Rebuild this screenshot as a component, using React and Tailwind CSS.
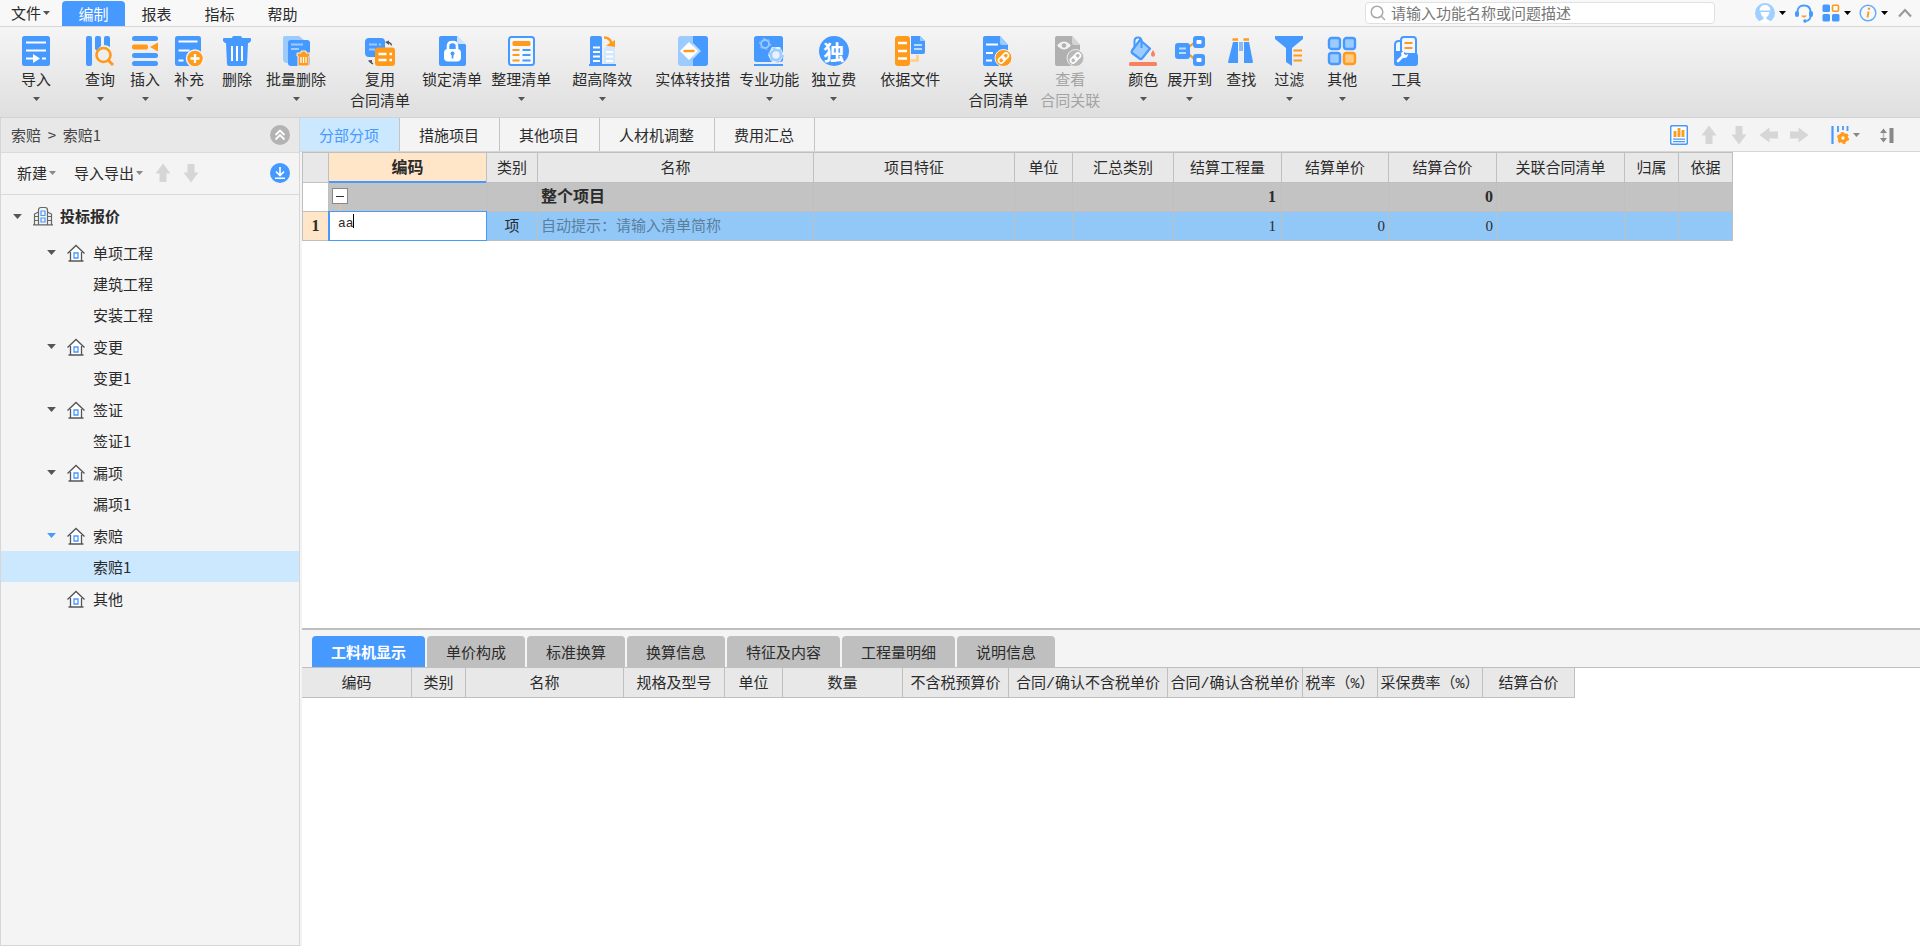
import React, { useState } from "react";

const BLUE = "#4599ff";
const ORANGE = "#ff9a1a";
const LIGHT = "#9ccbff";

function Icon({ children }) {
  return (
    <svg viewBox="0 0 30 30" className="h-[30px] w-[30px]" fill="none">
      {children}
    </svg>
  );
}

function Caret({ size = "h-1 w-[7px]", className = "text-[#555]" }) {
  return (
    <svg viewBox="0 0 7 4" className={`shrink-0 ${size} ${className}`}>
      <path d="M0 0h7L3.500 4z" fill="currentColor" />
    </svg>
  );
}

const ImportIcon = () => (
  <Icon>
    <rect x="1" width="28" height="30" rx="2.500" fill={BLUE} />
    <path d="M5 6.500h20M5 14.500h20M5 22.500h8M21 22.500h4" stroke="#fff" strokeWidth="2.200" />
    <path d="M12 18l7 4.500-7 4.500z" fill="#fff" />
  </Icon>
);

const QueryIcon = () => (
  <Icon>
    <rect x="1" width="6" height="30" rx="2" fill={BLUE} />
    <path d="M10 2q0-2 2-2h2q2 0 2 2v8q-3 2-4 5l-2-2z" fill={BLUE} />
    <path d="M19 2q0-2 2-2h2q2 0 2 2v9q-3-2-6-2z" fill={BLUE} />
    <circle cx="18.500" cy="19" r="7" stroke={ORANGE} strokeWidth="2.600" />
    <path d="M23.500 24.500l4.500 4.500" stroke={ORANGE} strokeWidth="3" />
  </Icon>
);

const InsertIcon = () => (
  <Icon>
    <rect x="2" width="26" height="5" rx="2.500" fill={BLUE} />
    <rect x="2" y="8.500" width="16" height="5" rx="2" fill={ORANGE} />
    <path d="M20 11l8-4.500v9z" fill={ORANGE} />
    <rect x="2" y="17" width="26" height="5" rx="2.500" fill={BLUE} />
    <rect x="2" y="25" width="26" height="5" rx="2.500" fill={BLUE} />
  </Icon>
);

const SupplementIcon = () => (
  <Icon>
    <rect x="1" width="26" height="30" rx="2.500" fill={BLUE} />
    <path d="M4.500 5.500h19M4.500 14.500h11M4.500 24.500h5" stroke="#fff" strokeWidth="2.200" />
    <circle cx="21" cy="22.500" r="8.500" fill={ORANGE} stroke="#f3f3f3" strokeWidth="1.500" />
    <path d="M16.500 22.500h9M21 18v9" stroke="#fff" strokeWidth="2.400" />
  </Icon>
);

const DeleteIcon = () => (
  <Icon>
    <path d="M10 2q0-2 2-2h6q2 0 2 2h8q1 0 1 1v2l-2 2h-1l-1 21q0 2-2 2H7q-2 0-2-2L4 7H3L1 5V3q0-1 1-1z" fill={BLUE} />
    <path d="M10 10v15M15 10v15M20 10v15" stroke="#fff" strokeWidth="2" />
  </Icon>
);

const BatchDeleteIcon = () => (
  <Icon>
    <path d="M4 0h14l5 4v23H6q-4 0-4-4V2q0-2 2-2z" fill={LIGHT} />
    <rect x="7" y="4" width="22" height="26" rx="3" fill={BLUE} />
    <path d="M10 8.500h12M10 13h8" stroke="#9ccbff" strokeWidth="2" />
    <path d="M20 15h5v2h4v3h-1v10H17V20h-1v-3h4z" fill={ORANGE} stroke="#f3f3f3" strokeWidth="1" />
    <path d="M20 21v6M22.500 21v6M25 21v6" stroke="#fff" strokeWidth="1.300" />
  </Icon>
);

const ReuseIcon = () => (
  <Icon>
    <rect y="2" width="20" height="19" rx="4" fill={BLUE} />
    <path d="M4 8.500h8M14 8.500h2M4 13.500h6" stroke="#9ccbff" strokeWidth="2" />
    <rect x="10" y="11.500" width="20" height="18.500" rx="3" fill={ORANGE} />
    <path d="M13.500 18h8M24.500 18h2.500M13.500 24h8M24.500 24h2.500" stroke="#fff" strokeWidth="2.400" />
    <path d="M20 6l4-1.500V9M3 24.500l4-.500v4" fill="#555" />
    <path d="M23 6.500q3 0 3.500 3M4 25l4 3" stroke="#555" strokeWidth="1.300" />
  </Icon>
);

const LockIcon = () => (
  <Icon>
    <path d="M4 0h16l9 9v19q0 2-2 2H4q-2 0-2-2V2q0-2 2-2z" fill={BLUE} />
    <path d="M20 0l9 8h-7q-2 0-2-2z" fill="#cde5ff" />
    <path d="M11 14v-4q0-4 4.500-4t4.500 4v4" stroke="#fff" strokeWidth="2.600" />
    <rect x="7" y="13" width="17" height="12.500" rx="4" fill="#fff" />
    <circle cx="15.500" cy="17.500" r="2" fill={BLUE} />
    <path d="M15.500 18v4.500" stroke={BLUE} strokeWidth="1.800" />
  </Icon>
);

const ArrangeIcon = () => (
  <Icon>
    <rect x="3" y="1" width="25" height="28" rx="2.500" fill="#f4f8ff" stroke={BLUE} strokeWidth="2" />
    <rect x="6.500" y="5" width="18" height="5" rx="1.500" fill={ORANGE} />
    <path d="M6.500 14h7M6.500 19h7M6.500 24.500h7" stroke={ORANGE} strokeWidth="2.200" />
    <path d="M16.500 14h8M16.500 19h8M16.500 24.500h8" stroke={BLUE} strokeWidth="2.200" />
  </Icon>
);

const HighRiseIcon = () => (
  <Icon>
    <path d="M3 28V2q0-2 2-2h8q2 0 2 2v26z" fill={BLUE} />
    <path d="M6 11.500h7M6 16h7M6 20.500h7M6 25h7" stroke="#fff" strokeWidth="2" />
    <path d="M17 28V12l3-2h6q2 0 2 2v16z" fill="#d3e8ff" />
    <path d="M19 16h7M19 20.500h7M19 25h7" stroke="#fff" strokeWidth="2" />
    <path d="M2 29h27" stroke={BLUE} strokeWidth="2" />
    <path d="M17 1.500q6 0 7.500 6" stroke={ORANGE} strokeWidth="2.600" />
    <path d="M19 9.500l9-5.500v7z" fill={ORANGE} />
  </Icon>
);

const ConvertIcon = () => (
  <Icon>
    <path d="M3 0h12v30H3q-3 0-3-3V3q0-3 3-3z" fill={LIGHT} />
    <path d="M15 0h12q3 0 3 3v24q0 3-3 3H15z" fill={BLUE} />
    <path d="M15 7l8 8-8 8z" fill="#b9dbff" />
    <path d="M11 6l9 9-9 9-9-9z" fill="#fff" />
    <path d="M5.500 15h11" stroke={ORANGE} strokeWidth="2.400" />
  </Icon>
);

const GearIcon = () => (
  <Icon>
    <rect width="29" height="26" rx="2.500" fill={BLUE} />
    <circle cx="11" cy="8" r="4" stroke={LIGHT} strokeWidth="1.800" />
    <circle cx="11" cy="8" r="5.500" stroke={LIGHT} strokeWidth="1" strokeDasharray="2 3.760" />
    <path d="M18 11h8l4 8-4 7h-8l-4-7z" fill="#e8f3ff" />
    <circle cx="22" cy="19" r="5" stroke={LIGHT} strokeWidth="2.600" />
    <circle cx="22" cy="19" r="7" stroke={LIGHT} strokeWidth="1.600" strokeDasharray="3 4.330" />
    <path d="M0 29h29" stroke={BLUE} strokeWidth="2" />
  </Icon>
);

const FeeIcon = () => (
  <span className="flex h-[30px] w-[30px] items-center justify-center rounded-full bg-[#4599ff] text-[21px] leading-[30px] font-bold text-white">
    独
  </span>
);

const BasisIcon = () => (
  <Icon>
    <rect width="15" height="30" rx="3" fill={ORANGE} />
    <path d="M3 7h9M3 15h9M3 22.500h9" stroke="#fff" strokeWidth="2.400" />
    <path d="M16 0h9l5 5v11q0 2-2 2H16z" fill={BLUE} />
    <path d="M25 0l5 5h-5z" fill={LIGHT} />
    <path d="M19 9h8M19 13h8" stroke="#b9dbff" strokeWidth="1.800" />
    <path d="M15.500 24.500h7V19" stroke="#ffcb85" strokeWidth="2.600" />
  </Icon>
);

const LinkMark = () => (
  <g stroke="#fff" strokeWidth="1.700" transform="rotate(-45 20.500 22)">
    <rect x="14.500" y="19.500" width="7" height="5" rx="2.500" />
    <rect x="19.500" y="19.500" width="7" height="5" rx="2.500" />
  </g>
);

const LinkIcon = () => (
  <Icon>
    <path d="M2 0h15l8 9v21H2q-2 0-2-2V2q0-2 2-2z" fill={BLUE} />
    <path d="M17 0l8 9h-6q-2 0-2-2z" fill={LIGHT} />
    <path d="M3 8.500h12M3 17h7M3 24.500h6" stroke="#fff" strokeWidth="2.200" />
    <circle cx="20.500" cy="22" r="8.500" fill={ORANGE} stroke="#f3f3f3" />
    <LinkMark />
  </Icon>
);

const ViewLinkIcon = () => (
  <Icon>
    <path d="M2 0h15l8 9v21H2q-2 0-2-2V2q0-2 2-2z" fill="#b0b0b0" />
    <path d="M17 0l8 9h-6q-2 0-2-2z" fill="#d4d4d4" />
    <path d="M2 9.500q7-8 14 0-7 8-14 0z" fill="#f2f2f2" />
    <circle cx="9" cy="9.500" r="2.200" fill="#b0b0b0" />
    <circle cx="20.500" cy="22" r="8.500" fill="#b8b8b8" stroke="#eee" />
    <LinkMark />
  </Icon>
);

const ColorIcon = () => (
  <Icon>
    <path d="M12 4l10 8.500-8 10q-1 1-2.500 0L4 17q-1-1 0-2.500z" fill={LIGHT} stroke={BLUE} strokeWidth="2.200" strokeLinejoin="round" />
    <path d="M6.500 11V5q0-3.500 3.500-3.500T13.500 5v7" stroke={BLUE} strokeWidth="2" />
    <path d="M25 14q3 4 1.500 6-1.500 1.500-3 0Q22 18 25 14z" fill="#f88160" />
    <rect x="1" y="26" width="28" height="4" rx="1.500" fill="#f88160" />
  </Icon>
);

const ExpandIcon = () => (
  <Icon>
    <path d="M14 11l6-5M14 18l6 6" stroke={ORANGE} strokeWidth="2" />
    <rect y="7" width="15" height="16" rx="3" fill={BLUE} />
    <path d="M4 12.500h7M4 17h7" stroke="#b9dbff" strokeWidth="2.200" />
    <rect x="18" width="12" height="12" rx="3" fill={BLUE} />
    <rect x="21.500" y="4" width="5" height="4" rx="1" fill="#fff" />
    <rect x="18" y="18" width="12" height="12" rx="3" fill={BLUE} />
    <rect x="21.500" y="22" width="5" height="4" rx="1" fill="#fff" />
  </Icon>
);

const FindIcon = () => (
  <Icon>
    <path d="M7 6h5v21H3q-1 0-1-1zM18 6h5l4 20q0 1-1 1h-8z" fill={BLUE} />
    <path d="M6.500 3.500H12M17.500 3.500H23" stroke={ORANGE} strokeWidth="2.400" />
    <path d="M14 6v9M16 6v9" stroke={BLUE} strokeWidth="1.200" />
  </Icon>
);

const FilterIcon = () => (
  <Icon>
    <path d="M1 0h28v3L18 12v18l-6-4V12L1 3z" fill={BLUE} />
    <path d="M19.500 14.500H28M19.500 19.500H28M19.500 24.500H28" stroke={ORANGE} strokeWidth="2.200" />
  </Icon>
);

const OtherIcon = () => (
  <Icon>
    <rect x="2" y="2" width="11" height="11" rx="2.500" fill={LIGHT} stroke={BLUE} strokeWidth="2.400" />
    <rect x="17" y="2" width="11" height="11" rx="2.500" fill={LIGHT} stroke={BLUE} strokeWidth="2.400" />
    <rect x="2" y="17" width="11" height="11" rx="2.500" fill={LIGHT} stroke={BLUE} strokeWidth="2.400" />
    <rect x="17" y="17" width="11" height="11" rx="2.500" fill="#ffcb85" stroke={ORANGE} strokeWidth="2.400" />
  </Icon>
);

const ToolIcon = () => (
  <Icon>
    <path d="M4 20V9q0-4 4-4h3v12z" fill="#f2f7ff" stroke={BLUE} strokeWidth="2" />
    <path d="M10 18V4q0-3 3-3h9q3 0 3 3v14z" fill="#f2f7ff" stroke={BLUE} strokeWidth="2" />
    <path d="M13.500 7h8M13.500 12h8" stroke={ORANGE} strokeWidth="2.200" />
    <path d="M3 15h7q2 0 3 1t3 1h8q3 0 3 3v7q0 3-3 3H6q-3 0-3-3z" fill={BLUE} />
    <path d="M7 25l5-5" stroke="#fff" strokeWidth="2.600" strokeLinecap="round" />
    <path d="M11 21l-1-4 3-2v3l2 1 2-1q0 4-4 4z" fill="#fff" />
  </Icon>
);

const ribbonItems = [
  { label: ["导入"], icon: ImportIcon, caret: true, margin: "ml-[21px]" },
  { label: ["查询"], icon: QueryIcon, caret: true, margin: "ml-[34px]" },
  { label: ["插入"], icon: InsertIcon, caret: true, margin: "ml-[15px]" },
  { label: ["补充"], icon: SupplementIcon, caret: true, margin: "ml-[14px]" },
  { label: ["删除"], icon: DeleteIcon, margin: "ml-[18px]" },
  { label: ["批量删除"], icon: BatchDeleteIcon, caret: true, margin: "ml-[14px]" },
  { label: ["复用", "合同清单"], icon: ReuseIcon, margin: "ml-[24px]" },
  { label: ["锁定清单"], icon: LockIcon, margin: "ml-[12px]" },
  { label: ["整理清单"], icon: ArrangeIcon, caret: true, margin: "ml-[9px]" },
  { label: ["超高降效"], icon: HighRiseIcon, caret: true, margin: "ml-[21px]" },
  { label: ["实体转技措"], icon: ConvertIcon, margin: "ml-[23px]" },
  { label: ["专业功能"], icon: GearIcon, caret: true, margin: "ml-[9px]" },
  { label: ["独立费"], icon: FeeIcon, caret: true, margin: "ml-[12px]" },
  { label: ["依据文件"], icon: BasisIcon, margin: "ml-[24px]" },
  { label: ["关联", "合同清单"], icon: LinkIcon, margin: "ml-[28px]" },
  { label: ["查看", "合同关联"], icon: ViewLinkIcon, disabled: true, margin: "ml-[12px]" },
  { label: ["颜色"], icon: ColorIcon, caret: true, margin: "ml-[28px]" },
  { label: ["展开到"], icon: ExpandIcon, caret: true, margin: "ml-[9px]" },
  { label: ["查找"], icon: FindIcon, margin: "ml-[14px]" },
  { label: ["过滤"], icon: FilterIcon, caret: true, margin: "ml-[18px]" },
  { label: ["其他"], icon: OtherIcon, caret: true, margin: "ml-[23px]" },
  { label: ["工具"], icon: ToolIcon, caret: true, margin: "ml-[34px]" },
];

const menus = ["编制", "报表", "指标", "帮助"];

const tree = [
  { name: "单项工程", children: ["建筑工程", "安装工程"] },
  { name: "变更", children: ["变更1"] },
  { name: "签证", children: ["签证1"] },
  { name: "漏项", children: ["漏项1"] },
  { name: "索赔", children: ["索赔1"] },
  { name: "其他", children: [] },
];

const mainTabs = ["分部分项", "措施项目", "其他项目", "人材机调整", "费用汇总"];

const mainColumns = [
  { name: "编码", width: "w-[158px]" },
  { name: "类别", width: "w-[51px]" },
  { name: "名称", width: "w-[276px]" },
  { name: "项目特征", width: "w-[201px]" },
  { name: "单位", width: "w-[58px]" },
  { name: "汇总类别", width: "w-[101px]" },
  { name: "结算工程量", width: "w-[108px]" },
  { name: "结算单价", width: "w-[107px]" },
  { name: "结算合价", width: "w-[108px]" },
  { name: "关联合同清单", width: "w-[128px]" },
  { name: "归属", width: "w-[54px]" },
  { name: "依据", width: "w-[54px]" },
];

const detailTabs = ["工料机显示", "单价构成", "标准换算", "换算信息", "特征及内容", "工程量明细", "说明信息"];

const detailColumns = [
  { name: "编码", width: "w-[110px]" },
  { name: "类别", width: "w-[54px]" },
  { name: "名称", width: "w-[158px]" },
  { name: "规格及型号", width: "w-[101px]" },
  { name: "单位", width: "w-[58px]" },
  { name: "数量", width: "w-[120px]" },
  { name: "不含税预算价", width: "w-[106px]" },
  { name: "合同/确认不含税单价", width: "w-[159px]" },
  { name: "合同/确认含税单价", width: "w-[135px]" },
  { name: "税率（%）", width: "w-[75px]" },
  { name: "采保费率（%）", width: "w-[105px]" },
  { name: "结算合价", width: "w-[92px]" },
];

function MenuBar() {
  return (
    <header className="flex h-[27px] shrink-0 items-center border-b border-[#d6d6d6] bg-[#f8f8f8]">
      <button className="flex w-[62px] items-center gap-0.5 pl-[11px]">
        文件
        <Caret />
      </button>
      <nav className="flex self-stretch pt-px">
        {menus.map((menu, i) => (
          <button
            key={menu}
            className={
              i === 0
                ? "w-[63px] rounded-t bg-[#4599ff] text-white"
                : "w-[63px]"
            }
          >
            {menu}
          </button>
        ))}
      </nav>
      <label className="ml-auto flex h-[22px] w-[350px] items-center gap-[5px] rounded border border-[#e0e0e0] bg-white px-1">
        <svg viewBox="0 0 16 16" className="h-4 w-4 shrink-0" fill="none" stroke="#aaa" strokeWidth="1.500">
          <circle cx="7" cy="7" r="5.800" />
          <path d="M11 11l4 4" />
        </svg>
        <input
          aria-label="搜索"
          placeholder="请输入功能名称或问题描述"
          className="min-w-0 flex-1 outline-none placeholder:text-[#777]"
        />
      </label>
      <div className="ml-10 flex items-center pr-2">
        <button aria-label="用户" className="flex items-center gap-1">
          <svg viewBox="0 0 20 20" className="h-5 w-5">
            <circle cx="10" cy="10" r="10" fill="#9fd0ff" />
            <path d="M4.500 7.500Q5 2 10 2t5.500 5.500zM5.500 9h9q-.500 4-3 5v2q3 1 4 2.500Q10 22 4.500 18.500 5.500 17 8.500 16v-2q-2.500-1-3-5z" fill="#fff" />
          </svg>
          <Caret className="text-black" />
        </button>
        <button aria-label="客服" className="ml-2">
          <svg viewBox="0 0 20 20" className="h-5 w-5" fill="none">
            <path d="M3.500 11V9q0-6.500 6.500-6.500T16.500 9v4q0 4-4 5" stroke={BLUE} strokeWidth="1.800" />
            <rect x="1" y="8" width="4" height="6" rx="2" fill={BLUE} />
            <rect x="15" y="8" width="4" height="6" rx="2" fill={BLUE} />
            <path d="M7 12.500h6q-3 4-6 0z" fill={ORANGE} />
            <circle cx="11" cy="18" r="1.800" fill={BLUE} />
          </svg>
        </button>
        <button aria-label="应用" className="ml-2 flex items-center gap-1">
          <svg viewBox="0 0 18 18" className="h-[18px] w-[18px]">
            <rect x="0.500" y="0.500" width="7.500" height="7.500" rx="1.500" fill={BLUE} />
            <rect x="10.500" y="1.300" width="6" height="6" rx="1" fill="none" stroke={ORANGE} strokeWidth="1.600" />
            <rect x="0.500" y="10" width="7.500" height="7.500" rx="1.500" fill={BLUE} />
            <rect x="10" y="10" width="7.500" height="7.500" rx="1.500" fill={BLUE} />
          </svg>
          <Caret className="text-black" />
        </button>
        <button aria-label="信息" className="ml-2 flex items-center gap-1">
          <svg viewBox="0 0 18 18" className="h-[18px] w-[18px]" fill="none">
            <circle cx="9" cy="9" r="7.800" stroke="#63abff" strokeWidth="1.500" />
            <path d="M9.500 7.500L8.500 13.500" stroke={ORANGE} strokeWidth="1.800" />
            <circle cx="10" cy="4.800" r="1.200" fill={ORANGE} />
          </svg>
          <Caret className="text-black" />
        </button>
        <button aria-label="收起功能区" className="ml-2.5">
          <svg viewBox="0 0 14 10" className="h-2.5 w-3.5" fill="none">
            <path d="M1 8.500l6-6.500 6 6.500" stroke="#999" strokeWidth="2.200" />
          </svg>
        </button>
      </div>
    </header>
  );
}

function Ribbon() {
  return (
    <div className="flex h-[91px] shrink-0 items-start overflow-hidden border-b border-[#d2d2d2] bg-linear-to-b from-[#f5f5f5] to-[#dfdfdf] pt-[9px]">
      {ribbonItems.map(({ label, icon: ItemIcon, caret, disabled, margin }) => (
        <button
          key={label.join("")}
          disabled={disabled}
          className={`flex shrink-0 flex-col items-center leading-[21px] disabled:text-[#a3a3a3] ${margin}`}
        >
          <ItemIcon />
          <span className="mt-0.5 flex flex-col">
            {label.map((line) => (
              <span key={line}>{line}</span>
            ))}
          </span>
          {caret && <Caret className="mt-2 text-[#555]" />}
        </button>
      ))}
    </div>
  );
}

function BlockArrow({ label, turn = "" }) {
  return (
    <button aria-label={label} disabled>
      <svg viewBox="0 0 20 20" className={`h-5 w-5 ${turn}`}>
        <path d="M10 0.500l7.500 10h-4v8.500h-7v-8.500h-4z" fill="#d6d6d6" />
      </svg>
    </button>
  );
}

function HouseIcon() {
  return (
    <svg viewBox="0 0 18 18" className="h-[18px] w-[18px] shrink-0" fill="none">
      <path d="M3.500 8v9h11V8L9 2.500z" fill="#fff" />
      <path d="M0.500 9.500L9 1.500l8.500 8M3.500 8v9M14.500 8v9M1.500 17h15" stroke="#555" strokeWidth="1.300" />
      <path d="M7 9h4v5H7z" stroke={BLUE} strokeWidth="1.300" />
    </svg>
  );
}

function Sidebar({ selected, onSelect }) {
  return (
    <aside className="flex w-[300px] shrink-0 flex-col border border-t-0 border-[#d6d6d6] bg-[#f4f4f4]">
      <div className="flex h-[35px] items-center justify-between border-b border-[#dadada] bg-[#e8e8e8] pr-[9px] pl-2.5 text-[#444]">
        <span>索赔 &nbsp;&gt;&nbsp; 索赔1</span>
        <button aria-label="收起">
          <svg viewBox="0 0 20 20" className="h-5 w-5" fill="none">
            <circle cx="10" cy="10" r="10" fill="#b3b3b3" />
            <path d="M5.500 10L10 5.500l4.500 4.500M5.500 14.500L10 10l4.500 4.500" stroke="#fff" strokeWidth="1.800" />
          </svg>
        </button>
      </div>
      <div className="flex h-[42px] items-center border-b border-[#dadada] pr-[9px] pb-0.5 pl-4">
        <button className="flex items-center gap-0.5">
          新建
          <Caret className="text-[#888]" />
        </button>
        <button className="ml-[18px] flex items-center gap-0.5">
          导入导出
          <Caret className="text-[#888]" />
        </button>
        <div className="ml-2.5 flex gap-2">
          <BlockArrow label="上移" />
          <BlockArrow label="下移" turn="rotate-180" />
        </div>
        <button aria-label="下载" className="ml-auto">
          <svg viewBox="0 0 20 20" className="h-5 w-5" fill="none">
            <circle cx="10" cy="10" r="10" fill={BLUE} />
            <path d="M10 4v8M6 8.500l4 4 4-4M5 15.200h10" stroke="#fff" strokeWidth="1.600" />
          </svg>
        </button>
      </div>
      <div className="flex h-[42px] items-center pl-3 font-bold">
        <Caret size="h-[5px] w-[9px]" />
        <svg viewBox="0 0 20 20" className="mr-[7px] ml-[11px] h-5 w-5" fill="none" stroke="#666" strokeWidth="1.200">
          <path d="M5.500 18.500V4q0-2.500 2.500-2.500h4Q14.500 1.500 14.500 4v14.500M1.500 18.500V8L5.500 6M18.500 18.500V8l-4-2M0 18.800h20M2 10.500h3.500M2 14.500h3.500M14.500 10.500H18M14.500 14.500H18" />
          <path d="M8 5h4v4.500H8zM8 12h4v4H8z" stroke={BLUE} />
        </svg>
        投标报价
      </div>
      <ul className="space-y-px">
        {tree.map((node) => (
          <li key={node.name}>
            <button className="flex h-[31px] w-full items-center pl-[46px]">
              <Caret
                size="h-[5px] w-[9px]"
                className={
                  node.children.length === 0
                    ? "invisible"
                    : node.children.includes(selected)
                      ? "text-[#4599ff]"
                      : "text-[#555]"
                }
              />
              <span className="mr-2 ml-[11px]">
                <HouseIcon />
              </span>
              {node.name}
            </button>
            {node.children.map((child) => (
              <button
                key={child}
                onClick={() => onSelect(child)}
                className={`flex h-[31px] w-full items-center pl-[92px] ${
                  child === selected ? "bg-[#cce8ff]" : ""
                }`}
              >
                {child}
              </button>
            ))}
          </li>
        ))}
      </ul>
    </aside>
  );
}

function MainTabs() {
  return (
    <div className="flex h-[34px] shrink-0 items-center justify-between border-b border-[#d6d6d6] bg-[#f4f4f4]">
      <div className="flex self-stretch">
        {mainTabs.map((tab, i) => (
          <button
            key={tab}
            className={`border-r border-[#c4c4c4] pr-5 pl-[19px] ${
              i === 0 ? "bg-[#cce8ff] text-[#4599ff]" : ""
            }`}
          >
            {tab}
          </button>
        ))}
      </div>
      <div className="flex items-center pr-[26px]">
        <button aria-label="报表">
          <svg viewBox="0 0 18 20" className="h-5 w-[18px]" fill="none">
            <rect x="0.700" y="0.700" width="16.600" height="18.600" rx="1.500" fill="#fff" stroke={BLUE} strokeWidth="1.500" />
            <path d="M5 6v6M9 3v9M13 5v7" stroke={ORANGE} strokeWidth="2.800" />
            <path d="M3 14.200h12M3 16.700h12" stroke={BLUE} strokeWidth="1.300" />
          </svg>
        </button>
        <div className="ml-[11px] flex gap-2.5">
          <BlockArrow label="上移" />
          <BlockArrow label="下移" turn="rotate-180" />
          <BlockArrow label="左移" turn="-rotate-90" />
          <BlockArrow label="右移" turn="rotate-90" />
        </div>
        <button aria-label="列设置" className="ml-[22px] flex items-center gap-1">
          <svg viewBox="0 0 18 20" className="h-5 w-[18px]" fill="none">
            <path d="M1.500 1v18" stroke={BLUE} strokeWidth="2.200" />
            <path d="M7 1v6M12 1v4M16.500 1v5" stroke={BLUE} strokeWidth="1.800" />
            <circle cx="12" cy="13" r="3.400" stroke={ORANGE} strokeWidth="3.400" />
            <circle cx="12" cy="13" r="5.300" stroke={ORANGE} strokeWidth="1.600" strokeDasharray="2.800 2.750" />
          </svg>
          <Caret className="text-[#888]" />
        </button>
        <button aria-label="排序" className="ml-5">
          <svg viewBox="0 0 14 18" className="h-[18px] w-3.5">
            <path d="M0 7l3.500-4.500L7 7zM0 12l3.500 4.500L7 12z" fill="#888" />
            <path d="M3.500 7v5" stroke="#bbb" strokeWidth="1.500" />
            <rect x="9.500" y="2" width="4" height="15" fill="#888" />
          </svg>
        </button>
      </div>
    </div>
  );
}

function MainGrid() {
  const [code, setCode] = useState("aa");
  return (
    <div className="min-h-0 flex-1 overflow-hidden">
      <table className="w-[1431px] table-fixed border-separate border-spacing-0 border-l border-[#bfbfbf] font-['Liberation_Serif','Noto_Sans_CJK_SC',sans-serif] [&_td]:border-r [&_td]:border-b [&_td]:border-[#bfbfbf] [&_td]:p-0 [&_th]:border-[#bfbfbf]">
        <colgroup>
          <col className="w-[26px]" />
          {mainColumns.map((col) => (
            <col key={col.name} className={col.width} />
          ))}
        </colgroup>
        <thead>
          <tr className="h-[31px]">
            <th className="border-t border-r border-b bg-[#e8e8e8] p-0" />
            {mainColumns.map((col, i) => (
              <th
                key={col.name}
                className={
                  i === 0
                    ? "border-t border-r bg-[#ffe6c9] p-0 text-base leading-5 font-bold shadow-[inset_0_-2px_0_#4599ff]"
                    : "border-t border-r border-b bg-[#e8e8e8] p-0 leading-5 font-normal"
                }
              >
                {col.name}
              </th>
            ))}
          </tr>
        </thead>
        <tbody>
          <tr className="h-[29px] bg-[#c3c3c3] text-base leading-5 font-bold">
            <td className="bg-white" />
            <td>
              <div className="flex h-7 flex-col items-start pt-[5px] pl-[3px]">
                <button
                  aria-label="折叠"
                  className="flex h-4 w-4 items-center justify-center border border-[#888] bg-white"
                >
                  <span className="h-px w-2 bg-[#333]" />
                </button>
                <span className="ml-2 w-px flex-1 bg-[#ffc27a]" />
              </div>
            </td>
            <td />
            <td><span className="pl-[3px]">整个项目</span></td>
            <td />
            <td />
            <td />
            <td className="text-right"><span className="pr-[5px]">1</span></td>
            <td />
            <td className="text-right"><span className="pr-[3px]">0</span></td>
            <td />
            <td />
            <td />
          </tr>
          <tr className="h-[29px] bg-[#92c8f8] leading-5">
            <td className="bg-[#ffe6c9] text-center text-base font-bold">1</td>
            <td className="relative">
              <input
                aria-label="编码"
                value={code}
                onChange={(e) => setCode(e.target.value)}
                className="block h-7 w-full border-l border-[#4599ff] bg-white pb-1.5 pl-2 font-['Liberation_Mono',monospace] text-[13px] caret-transparent ring-1 ring-[#4599ff] outline-none"
              />
              <span className="absolute top-0.5 left-6 h-3.5 w-px bg-black" />
            </td>
            <td className="text-center">项</td>
            <td className="text-[#5a7f9f]"><span className="pl-[3px]">自动提示：请输入清单简称</span></td>
            <td />
            <td />
            <td />
            <td className="text-right"><span className="pr-[5px]">1</span></td>
            <td className="text-right"><span className="pr-[3px]">0</span></td>
            <td className="text-right"><span className="pr-[3px]">0</span></td>
            <td />
            <td />
            <td />
          </tr>
        </tbody>
      </table>
    </div>
  );
}

function DetailPanel() {
  return (
    <section className="flex h-[318px] shrink-0 flex-col border-t-2 border-[#bfbfbf]">
      <div className="flex h-[38px] shrink-0 items-end gap-0.5 border-b border-[#bfbfbf] bg-[#f4f4f4] pl-2.5">
        {detailTabs.map((tab, i) => (
          <button
            key={tab}
            className={`h-[31px] rounded-t-sm px-[19px] ${
              i === 0 ? "bg-[#4599ff] font-bold text-white" : "bg-[#bfbfbf]"
            }`}
          >
            {tab}
          </button>
        ))}
      </div>
      <table className="w-[1273px] table-fixed border-separate border-spacing-0 font-['Liberation_Mono','Noto_Sans_CJK_SC',sans-serif]">
        <colgroup>
          {detailColumns.map((col) => (
            <col key={col.name} className={col.width} />
          ))}
        </colgroup>
        <thead>
          <tr className="h-[30px]">
            {detailColumns.map((col) => (
              <th
                key={col.name}
                className="border-r border-b border-[#bfbfbf] bg-[#e8e8e8] px-0 pt-1 pb-0 leading-5 font-normal whitespace-nowrap"
              >
                {col.name}
              </th>
            ))}
          </tr>
        </thead>
      </table>
    </section>
  );
}

export default function App() {
  const [selected, setSelected] = useState("索赔1");

  return (
    <div className="flex h-screen flex-col overflow-hidden bg-white font-['Noto_Sans_CJK_SC',sans-serif] text-[15px] leading-5 text-[#2b2b2b]">
      <MenuBar />
      <Ribbon />
      <div className="flex min-h-0 flex-1">
        <Sidebar selected={selected} onSelect={setSelected} />
        <main className="flex min-w-0 flex-1 flex-col">
          <MainTabs />
          <div className="flex min-h-0 flex-1 flex-col border-l-2 border-[#f4f4f4]">
            <MainGrid />
            <DetailPanel />
          </div>
        </main>
      </div>
    </div>
  );
}
